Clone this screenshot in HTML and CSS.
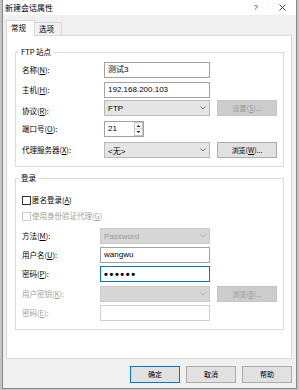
FILE: index.html
```html
<!DOCTYPE html>
<html>
<head>
    <meta charset="UTF-8">
    <title>新建会话属性</title>
    <link rel="stylesheet" href="styles.css">
</head>
<body>
    <div class="window">
        <div class="titlebar">
            <span class="title">新建会话属性</span>
            <span class="help">?</span>
            <svg class="close" width="7" height="7" viewBox="0 0 7 7"><path d="M0.5 0.5L6.5 6.5M6.5 0.5L0.5 6.5" stroke="#333" stroke-width="0.9"/></svg>
        </div>
        <div class="content">
            <div class="tabs">
                <div class="tab on">常规</div>
                <div class="tab">选项</div>
            </div>
            <div class="page">
                <fieldset class="group ftp">
                    <legend>FTP 站点</legend>
                    <div class="row">
                        <label>名称(<u>N</u>):</label>
                        <div class="text">测试3</div>
                    </div>
                    <div class="row mt4">
                        <label>主机(<u>H</u>):</label>
                        <div class="text">192.168.200.103</div>
                    </div>
                    <div class="row mt2">
                        <label class="low">协议(<u>R</u>):</label>
                        <div class="combo"><span>FTP</span><svg width="6" height="4" viewBox="0 0 6 4"><path d="M0.5 0.5L3 3L5.5 0.5" fill="none" stroke="#555" stroke-width="0.8"/></svg></div>
                        <div class="btn off">设置(<u>S</u>)...</div>
                    </div>
                    <div class="row mt5">
                        <label>端口号(<u>O</u>):</label>
                        <div class="text port">
                            <span>21</span>
                            <svg class="spin" width="9" height="14" viewBox="0 0 9 14">
                                <rect x="0.5" y="0.5" width="8" height="13" fill="#fff" stroke="#c4c4c4"/>
                                <line x1="0.5" y1="7" x2="8.5" y2="7" stroke="#c4c4c4"/>
                                <path d="M2.5 5L4.5 3L6.5 5Z" fill="#222"/>
                                <path d="M2.5 9L4.5 11L6.5 9Z" fill="#222"/>
                            </svg>
                        </div>
                    </div>
                    <div class="row mt5">
                        <label>代理服务器(<u>X</u>):</label>
                        <div class="combo"><span>&lt;无&gt;</span><svg width="6" height="4" viewBox="0 0 6 4"><path d="M0.5 0.5L3 3L5.5 0.5" fill="none" stroke="#555" stroke-width="0.8"/></svg></div>
                        <div class="btn">浏览(<u>W</u>)...</div>
                    </div>
                </fieldset>

                <fieldset class="group login">
                    <legend>登录</legend>
                    <div class="crow mt7">
                        <span class="check"></span>
                        <span>匿名登录(<u>A</u>)</span>
                    </div>
                    <div class="crow mt6 dim">
                        <span class="check"></span>
                        <span>使用身份验证代理(<u>G</u>)</span>
                    </div>
                    <div class="row mt7">
                        <label>方法(<u>M</u>):</label>
                        <div class="combo off"><span>Password</span><svg width="6" height="4" viewBox="0 0 6 4"><path d="M0.5 0.5L3 3L5.5 0.5" fill="none" stroke="#aaa" stroke-width="0.8"/></svg></div>
                    </div>
                    <div class="row mt3">
                        <label>用户名(<u>U</u>):</label>
                        <div class="text">wangwu</div>
                    </div>
                    <div class="row mt3">
                        <label>密码(<u>P</u>):</label>
                        <div class="text focus"><span class="dots">••••••</span></div>
                    </div>
                    <div class="row mt4 dim">
                        <label>用户密钥(<u>K</u>):</label>
                        <div class="combo off"><span></span><svg width="6" height="4" viewBox="0 0 6 4"><path d="M0.5 0.5L3 3L5.5 0.5" fill="none" stroke="#aaa" stroke-width="0.8"/></svg></div>
                        <div class="btn off">浏览(<u>B</u>)...</div>
                    </div>
                    <div class="row mt3 dim">
                        <label>密码(<u>E</u>):</label>
                        <div class="text off"></div>
                    </div>
                </fieldset>
            </div>
            <div class="actions">
                <div class="btn wide default">确定</div>
                <div class="btn wide">取消</div>
                <div class="btn wide">帮助</div>
            </div>
        </div>
    </div>
</body>
</html>
```

FILE: styles.css
```css
* {
    margin: 0;
    padding: 0;
    box-sizing: border-box;
}
body {
    background: #c4c4c4;
    font-family: "Noto Sans CJK SC", "Liberation Sans", sans-serif;
    font-size: 7.5px;
    color: #000;
}
u {
    text-decoration: underline;
}
.window {
    width: 295px;
    height: 389px;
    margin-left: 2px;
    border: 1px solid #8a8a8a;
    border-top: 0;
    background: #f0f0f0;
}
.titlebar {
    height: 15px;
    background: #fff;
    display: flex;
    align-items: center;
    padding: 0 10px 0 2px;
    font-size: 8px;
    line-height: 15px;
}
.titlebar .title {
    flex: 1;
}
.titlebar .help {
    font-family: "Liberation Sans", sans-serif;
    font-size: 8px;
    color: #333;
    margin-right: 21px;
}
.content {
    padding: 5px 4px 0 3px;
}
.tabs {
    position: relative;
    z-index: 1;
    display: flex;
    align-items: flex-end;
    height: 16px;
    margin-bottom: -1px;
}
.tab {
    width: 27px;
    height: 13px;
    margin-bottom: 1px;
    border: 1px solid #d9d9d9;
    border-bottom: 0;
    border-left: 0;
    background: #f0f0f0;
    line-height: 12px;
    padding-left: 4px;
}
.tab.on {
    width: 29px;
    height: 16px;
    margin-bottom: 0;
    border-left: 1px solid #d9d9d9;
    background: #fff;
    line-height: 14px;
}
.page {
    height: 324px;
    background: #fff;
    border: 1px solid #d9d9d9;
    padding-top: 11px;
}
.group {
    margin: 0 7px 0 8px;
    padding: 5px 0 8px 6px;
    border: 1px solid #dcdcdc;
    min-width: 0;
}
.group legend {
    margin-left: -3px;
    padding: 0 2px;
    line-height: 10px;
}
.group.login {
    margin-top: 6px;
}
.row {
    display: flex;
    align-items: center;
    height: 16px;
}
.row label {
    width: 82px;
    line-height: 10px;
}
.login .row label {
    width: 78px;
}
.row label.low {
    padding-top: 6px;
}
.mt2 { margin-top: 2px; }
.mt3 { margin-top: 3px; }
.mt4 { margin-top: 4px; }
.mt5 { margin-top: 5px; }
.mt6 { margin-top: 6px; }
.mt7 { margin-top: 7px; }
.text {
    width: 106px;
    height: 16px;
    border: 1px solid #a2a2a2;
    background: #fff;
    font-family: "Liberation Sans", "Noto Sans CJK SC", sans-serif;
    font-size: 8px;
    line-height: 14px;
    padding-left: 3px;
    display: flex;
    align-items: center;
}
.login .text,
.login .combo {
    width: 110px;
}
.text.port {
    width: 40px;
    justify-content: space-between;
    padding-right: 0;
}
.text.port .spin {
    margin-right: 0;
}
.text.focus {
    border-color: #0078d7;
}
.text.off {
    border-color: #cfcfcf;
}
.dots {
    font-size: 11px;
    font-weight: bold;
    letter-spacing: 1.6px;
    line-height: 14px;
}
.combo {
    width: 106px;
    height: 16px;
    border: 1px solid #b9b9b9;
    background: #e5e5e5;
    font-family: "Liberation Sans", "Noto Sans CJK SC", sans-serif;
    font-size: 8px;
    display: flex;
    align-items: center;
    justify-content: space-between;
    padding: 0 3px 0 3px;
}
.combo.off {
    background: #d6d6d6;
    border-color: #cacaca;
    color: #9c9c9c;
}
.btn {
    width: 60px;
    height: 16px;
    margin-left: 7px;
    border: 1px solid #adadad;
    background: #e1e1e1;
    font-size: 7px;
    line-height: 14px;
    text-align: center;
}
.btn.off {
    background: #cccccc;
    border-color: #c6c6c6;
    color: #9a9a9a;
}
.dim {
    color: #a0a0a0;
}
.crow {
    display: flex;
    align-items: center;
    height: 10px;
    line-height: 10px;
}
.check {
    width: 9px;
    height: 9px;
    border: 1px solid #333;
    background: #fff;
    margin-right: 1px;
}
.dim .check {
    border-color: #cccccc;
}
.actions {
    display: flex;
    justify-content: flex-end;
    margin-top: 7px;
}
.btn.wide {
    width: 50px;
    height: 17px;
    margin-left: 6px;
    line-height: 15px;
}
.btn.default {
    border-color: #0078d7;
}
```
